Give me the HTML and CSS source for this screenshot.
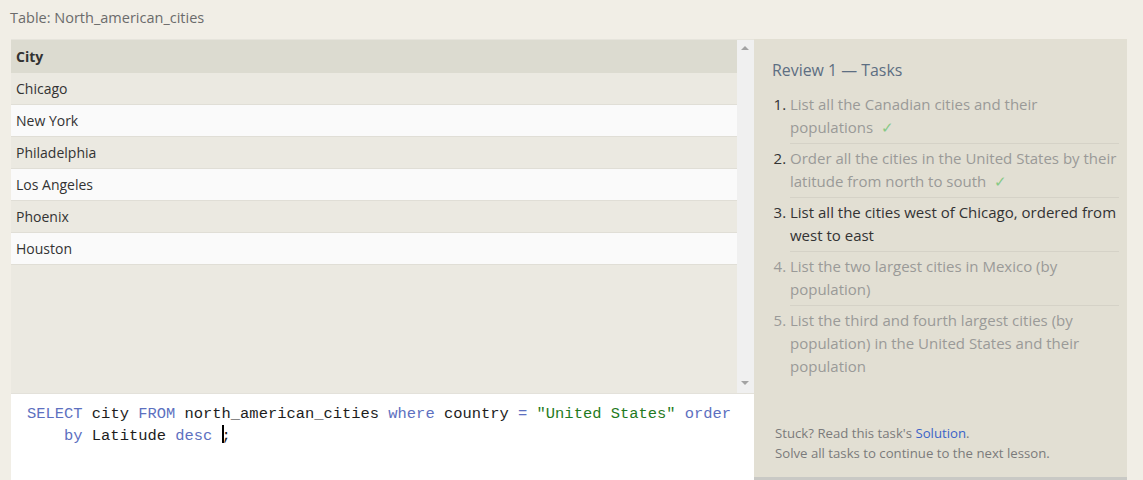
FILE: index.html
```html
<!DOCTYPE html>
<html>
<head>
<meta charset="utf-8">
<link rel="stylesheet" href="styles.css">
</head>
<body>
<div class="title">Table: North_american_cities</div>
<div class="main">
  <div class="left">
    <div class="results">
      <div class="table-wrap">
        <div class="row head">City</div>
        <div class="row odd">Chicago</div>
        <div class="row even">New York</div>
        <div class="row odd">Philadelphia</div>
        <div class="row even">Los Angeles</div>
        <div class="row odd">Phoenix</div>
        <div class="row even">Houston</div>
      </div>
      <div class="scrollbar">
        <span class="arrow up"></span>
        <span class="arrow down"></span>
      </div>
    </div>
    <div class="editor">
      <div class="code-line"><span class="kw">SELECT</span> city <span class="kw">FROM</span> north_american_cities <span class="kw">where</span> country <span class="kw">=</span> <span class="str">"United States"</span> <span class="kw">order</span></div>
      <div class="code-line indent"><span class="kw">by</span> Latitude <span class="kw">desc</span> <span class="cursor"></span>;</div>
    </div>
  </div>
  <div class="right">
    <div class="tasks-title">Review 1 — Tasks</div>
    <ol class="tasks">
      <li class="done">List all the Canadian cities and their populations&nbsp;&nbsp;<span class="check">✓</span></li>
      <li class="done">Order all the cities in the United States by their latitude from north to south&nbsp;&nbsp;<span class="check">✓</span></li>
      <li class="current">List all the cities west of Chicago, ordered from west to east</li>
      <li class="todo">List the two largest cities in Mexico (by population)</li>
      <li class="todo last">List the third and fourth largest cities (by population) in the United States and their population</li>
    </ol>
    <div class="footer">
      <div>Stuck? Read this task's <span class="link">Solution</span>.</div>
      <div>Solve all tasks to continue to the next lesson.</div>
    </div>
  </div>
</div>
</body>
</html>
```

FILE: styles.css
```css
html, body {
  margin: 0;
  padding: 0;
}
body {
  background: #f1eee6;
  font-family: "Open Sans", "Noto Sans", sans-serif;
  font-size: 13px;
  color: #333;
  width: 1143px;
  height: 480px;
  overflow: hidden;
}
.title {
  color: #6b6b6b;
  font-size: 14.5px;
  padding: 8px 0 0 10px;
  height: 39px;
  box-sizing: border-box;
  line-height: 20px;
}
.main {
  display: flex;
  margin-left: 11px;
  height: 441px;
}
.left {
  width: 743px;
  display: flex;
  flex-direction: column;
  border-top: 1px solid #e6e4dc;
}
.results {
  display: flex;
  height: 353px;
  background: #ebe9e1;
}
.table-wrap {
  flex: 1;
}
.row {
  height: 32px;
  line-height: 32px;
  padding-left: 5px;
  border-bottom: 1px solid #e0ded6;
  box-sizing: border-box;
  font-size: 14px;
  color: #333;
}
.row.head {
  background: #dcdbd0;
  font-weight: bold;
  height: 33px;
  line-height: 33px;
  border-bottom: none;
}
.row.odd { background: #ebe9e1; }
.row.even { background: #fafafa; }
.scrollbar {
  width: 17px;
  background: #f0f0f0;
  position: relative;
}
.arrow {
  position: absolute;
  left: 4px;
  width: 0;
  height: 0;
  border-left: 4px solid transparent;
  border-right: 4px solid transparent;
}
.arrow.up {
  top: 6px;
  border-bottom: 4px solid #a3a3a3;
}
.arrow.down {
  bottom: 8px;
  border-top: 4px solid #a3a3a3;
}
.editor {
  flex: 1;
  background: #ffffff;
  border-top: 1px solid #e3e1da;
  padding: 10px 0 0 16px;
  font-family: "Liberation Mono", "DejaVu Sans Mono", monospace;
  font-size: 15.45px;
  line-height: 21px;
  color: #1d1d1d;
}
.code-line { white-space: pre; }
.code-line.indent { padding-left: 4ch; }
.kw { color: #5d70c0; }
.str { color: #1f7a22; }
.cursor {
  display: inline-block;
  width: 2px;
  height: 18px;
  background: #000;
  vertical-align: -3px;
  margin-right: -2px;
}
.right {
  width: 373px;
  background: #e2dfd3;
  border-bottom: 3px solid #c9c9c5;
  box-sizing: border-box;
  display: flex;
  flex-direction: column;
  padding: 20px 8px 0 18px;
}
.tasks-title {
  color: #5d6e82;
  font-size: 15.9px;
  line-height: 22px;
  margin-bottom: 9px;
}
.tasks {
  margin: 0;
  padding: 0 0 0 18px;
  font-size: 15px;
  line-height: 23px;
}
.tasks li {
  padding: 3px 0 4px 0;
  border-bottom: 1px solid #d5d2c7;
  color: #9a9a98;
}
.tasks li::marker { color: #333; }
.tasks li.todo::marker { color: #9a9a98; }
.tasks li.last { border-bottom: none; }
.tasks li.current { color: #333; }
.check {
  color: #86c986;
}
.footer {
  margin-top: auto;
  padding: 0 0 14px 3px;
  font-size: 13.2px;
  line-height: 20px;
  color: #7b7b7b;
}
.link { color: #3a63c8; }
```
